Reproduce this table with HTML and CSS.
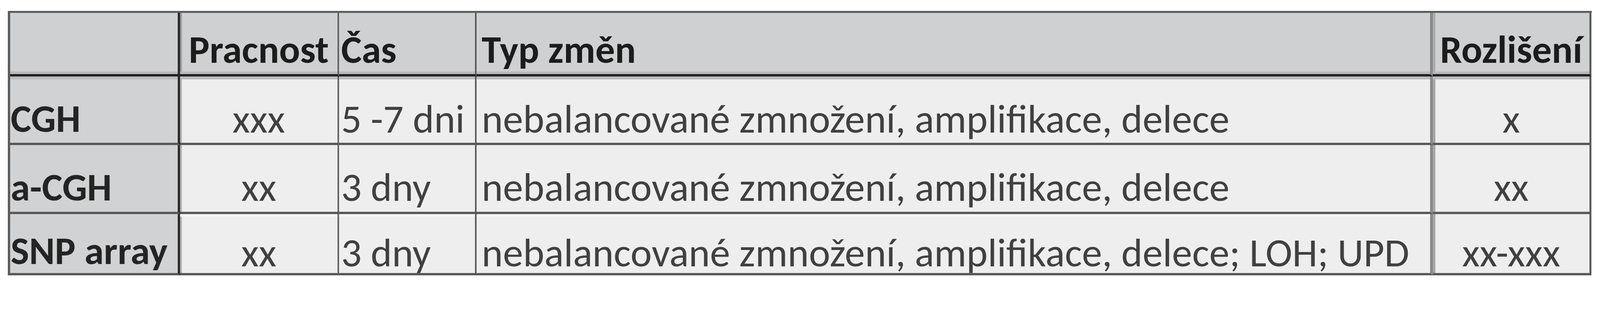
FILE: index.html
```html
<!DOCTYPE html>
<html lang="cs">
<head>
<meta charset="utf-8">
<title>Metody</title>
<link rel="stylesheet" href="styles.css">
</head>
<body>
<div class="grid" role="table">
  <div class="cell head label" role="columnheader"></div>
  <div class="cell head k2 mid" role="columnheader">Pracnost</div>
  <div class="cell head k3" role="columnheader">Čas</div>
  <div class="cell head k4" role="columnheader">Typ změn</div>
  <div class="cell head k5 mid" role="columnheader">Rozlišení</div>

  <div class="cell r1 label" role="rowheader">CGH</div>
  <div class="cell r1 k2 mid" role="cell">xxx</div>
  <div class="cell r1 k3" role="cell">5 -7 dni</div>
  <div class="cell r1 k4" role="cell">nebalancované zmnožení, amplifikace, delece</div>
  <div class="cell r1 k5 mid" role="cell">x</div>

  <div class="cell r2 label" role="rowheader">a-CGH</div>
  <div class="cell r2 k2 mid" role="cell">xx</div>
  <div class="cell r2 k3" role="cell">3 dny</div>
  <div class="cell r2 k4" role="cell">nebalancované zmnožení, amplifikace, delece</div>
  <div class="cell r2 k5 mid" role="cell">xx</div>

  <div class="cell r3 label" role="rowheader">SNP array</div>
  <div class="cell r3 k2 mid" role="cell">xx</div>
  <div class="cell r3 k3" role="cell">3 dny</div>
  <div class="cell r3 k4" role="cell">nebalancované zmnožení, amplifikace, delece; LOH; UPD</div>
  <div class="cell r3 k5 mid" role="cell">xx-xxx</div>
</div>
</body>
</html>
```
FILE: styles.css
```css
:root {
  --u: calc(100vw / 4426);
}

html, body {
  margin: 0;
  padding: 0;
  background: #ffffff;
  overflow: hidden;
}

body {
  padding: calc(30 * var(--u)) 0 0 calc(22 * var(--u));
  font-family: Carlito, "Open Sans", "Liberation Sans", sans-serif;
}

.grid {
  display: grid;
  width: calc(4381 * var(--u));
  box-sizing: border-box;
  grid-template-columns:
    calc(470 * var(--u))
    calc(439 * var(--u))
    calc(381 * var(--u))
    calc(2645 * var(--u))
    calc(439 * var(--u));
  grid-template-rows:
    calc(176 * var(--u))
    calc(191 * var(--u))
    calc(191 * var(--u))
    calc(169 * var(--u));
  border-top: calc(6 * var(--u)) solid #5c5c5c;
  border-left: calc(7 * var(--u)) solid #5c5c5c;
}

.cell {
  box-sizing: border-box;
  display: flex;
  align-items: flex-end;
  justify-content: flex-start;
  white-space: nowrap;
  font-size: calc(112 * var(--u));
  line-height: 1;
  color: #404040;
  background: #eeeeee;
  border-bottom: calc(7 * var(--u)) solid #5a5a5a;
}

.k2 {
  border-right: calc(5 * var(--u)) solid #626262;
  box-shadow: inset calc(5 * var(--u)) 0 0 #b3b3b3;
}

.k3 {
  border-right: calc(5 * var(--u)) solid #595959;
  padding-left: calc(6 * var(--u));
}

.k4 {
  border-right: calc(8 * var(--u)) solid #8a8a8a;
  padding-left: calc(14 * var(--u));
}

.k5 {
  border-right: calc(6 * var(--u)) solid #5a5a5a;
  box-shadow: inset calc(7 * var(--u)) 0 0 #a6a6a6;
}

.mid {
  justify-content: center;
}

.label {
  background: #d1d2d4;
  color: #242424;
  font-weight: 700;
  font-size: calc(108 * var(--u));
  padding-left: calc(1 * var(--u));
  border-right: calc(7 * var(--u)) solid #2c2c2f;
}

.head {
  background: #cfd0d2;
  color: #1c1c1c;
  font-weight: 700;
  font-size: calc(108 * var(--u));
  padding-bottom: calc(13 * var(--u));
  border-bottom-color: #231f21;
  box-shadow: inset 0 calc(-7 * var(--u)) 0 #b8babc;
}

.head.k2 {
  box-shadow: inset 0 calc(-7 * var(--u)) 0 #b8babc, inset calc(5 * var(--u)) 0 0 #999999;
}

.head.k5 {
  box-shadow: inset 0 calc(-7 * var(--u)) 0 #b8babc, inset calc(7 * var(--u)) 0 0 #a9abad;
}

.r1 {
  padding-bottom: calc(11 * var(--u));
  box-shadow: inset 0 calc(8 * var(--u)) 0 #b9bbbd;
}

.r1.label {
  padding-bottom: calc(12 * var(--u));
}

.r1.k2 {
  box-shadow: inset 0 calc(8 * var(--u)) 0 #b9bbbd, inset calc(5 * var(--u)) 0 0 #b3b3b3;
}

.r1.k5 {
  box-shadow: inset 0 calc(8 * var(--u)) 0 #b9bbbd, inset calc(7 * var(--u)) 0 0 #a6a6a6;
}

.r2 {
  padding-bottom: calc(12 * var(--u));
}

.r2.label {
  padding-bottom: calc(13 * var(--u));
}

.r3 {
  padding-bottom: 0;
}

.r3.label {
  padding-bottom: calc(6 * var(--u));
}

.r3.k3,
.r3.k4 {
  box-shadow: inset 0 calc(7 * var(--u)) 0 #f6f6f6;
}

.r3.k2 {
  box-shadow: inset 0 calc(7 * var(--u)) 0 #f6f6f6, inset calc(5 * var(--u)) 0 0 #b3b3b3;
}
```
